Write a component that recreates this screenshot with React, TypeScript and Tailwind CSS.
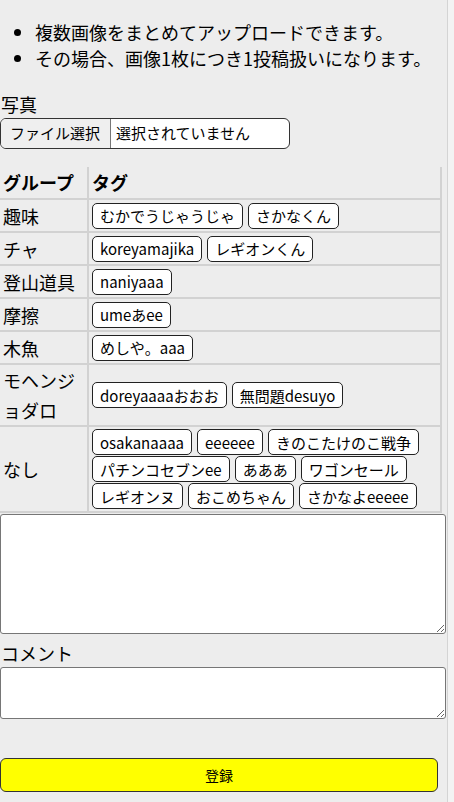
import React from "react";

const font = { fontFamily: '"Noto Sans CJK JP", "Noto Sans", sans-serif' };

type Row = { group: string; tags: string[] };

const rows: Row[] = [
  { group: "趣味", tags: ["むかでうじゃうじゃ", "さかなくん"] },
  { group: "チャ", tags: ["koreyamajika", "レギオンくん"] },
  { group: "登山道具", tags: ["naniyaaa"] },
  { group: "摩擦", tags: ["umeあee"] },
  { group: "木魚", tags: ["めしや。aaa"] },
  { group: "モヘンジョダロ", tags: ["doreyaaaaおおお", "無問題desuyo"] },
  {
    group: "なし",
    tags: [
      "osakanaaaa",
      "eeeeee",
      "きのこたけのこ戦争",
      "パチンコセブンee",
      "あああ",
      "ワゴンセール",
      "レギオンヌ",
      "おこめちゃん",
      "さかなよeeeee",
    ],
  },
];

const Tag = ({ label }: { label: string }) => (
  <span className="inline-flex items-center h-[26px] px-[7px] border border-[#222] rounded-[5px] bg-white text-[15px] leading-none text-black whitespace-nowrap">
    {label}
  </span>
);

const App = () => {
  return (
    <div className="flex w-[454px] min-h-[802px] bg-[#ededed] text-black" style={font}>
      <div className="w-[447px] shrink-0">
        <ul className="list-disc pl-[35px] mt-[19px] text-[18px] leading-[26px]">
          <li>複数画像をまとめてアップロードできます。</li>
          <li>その場合、画像1枚につき1投稿扱いになります。</li>
        </ul>

        <div className="mt-[22px] text-[18px] leading-[22px] pl-[1px]">写真</div>
        <div className="mt-[3px] flex w-[290px] h-[31px] border border-[#333] rounded-[6px] bg-white overflow-hidden text-[15px]">
          <div className="flex items-center w-[110px] px-[9px] bg-[#efefef] border-r border-[#777]">
            ファイル選択
          </div>
          <div className="flex items-center pl-[5px]">選択されていません</div>
        </div>

        <div className="mt-[18px] grid grid-cols-[89px_353px] text-[18px]">
          <div className="flex items-center h-[33px] px-[3px] font-bold border-r-2 border-b-2 border-[#d2d2d2]">
            グループ
          </div>
          <div className="flex items-center h-[33px] px-[3px] font-bold border-r-2 border-b-2 border-[#d2d2d2]">
            タグ
          </div>
          {rows.map((row) => (
            <React.Fragment key={row.group}>
              <div className="flex items-center px-[3px] leading-[30px] border-r-2 border-b-2 border-[#d2d2d2]">
                {row.group}
              </div>
              <div className="flex flex-wrap items-center content-center gap-x-[5px] gap-y-[1px] min-h-[33px] px-[3px] py-[2px] border-r-2 border-b-2 border-[#d2d2d2]">
                {row.tags.map((t) => (
                  <Tag key={t} label={t} />
                ))}
              </div>
            </React.Fragment>
          ))}
        </div>

        <textarea className="block mt-[1px] w-[446px] h-[120px] bg-white border border-[#767676] rounded-[3px]" />

        <div className="mt-[8px] text-[18px] leading-[22px] pl-[1px]">コメント</div>
        <textarea className="block mt-[3px] w-[446px] h-[52px] bg-white border border-[#767676] rounded-[3px]" />

        <button className="block mt-[39px] w-[438px] h-[34px] bg-[#ffff00] border border-[#333] rounded-[6px] text-[14px] text-black">
          登録
        </button>
      </div>
      <div className="w-[7px] border-l border-[#d4d4d4] bg-[#f3f3f3]" />
    </div>
  );
};

export default App;
